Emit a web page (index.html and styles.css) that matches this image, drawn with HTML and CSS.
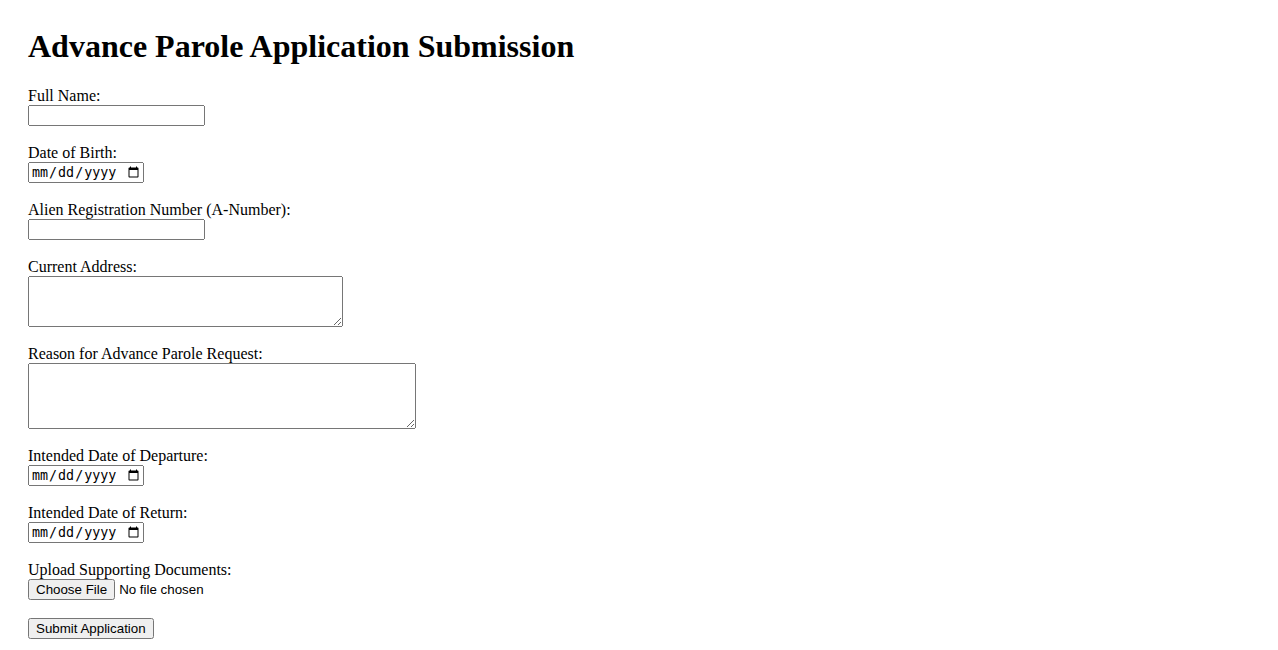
FILE: index.html
```html
<!DOCTYPE html>
<html lang="en">
<head>
<meta charset="utf-8">
<title>Advance Parole Application Submission</title>
<link rel="stylesheet" href="styles.css">
</head>
<body>
<h1 class="title">Advance Parole Application Submission</h1>
<form class="form">
  <div class="field">
    <label class="label" for="name">Full Name:</label>
    <input class="text" type="text" id="name">
  </div>
  <div class="field">
    <label class="label" for="dob">Date of Birth:</label>
    <input class="date" type="date" id="dob">
  </div>
  <div class="field">
    <label class="label" for="anum">Alien Registration Number (A-Number):</label>
    <input class="text" type="text" id="anum">
  </div>
  <div class="field">
    <label class="label" for="addr">Current Address:</label>
    <textarea class="area area-addr" id="addr"></textarea>
  </div>
  <div class="field">
    <label class="label" for="reason">Reason for Advance Parole Request:</label>
    <textarea class="area area-reason" id="reason"></textarea>
  </div>
  <div class="field">
    <label class="label" for="dep">Intended Date of Departure:</label>
    <input class="date" type="date" id="dep">
  </div>
  <div class="field">
    <label class="label" for="ret">Intended Date of Return:</label>
    <input class="date" type="date" id="ret">
  </div>
  <div class="field">
    <label class="label" for="docs">Upload Supporting Documents:</label>
    <input class="file" type="file" id="docs">
  </div>
  <div class="field field-last">
    <button class="submit" type="submit">Submit Application</button>
  </div>
</form>
</body>
</html>
```
FILE: styles.css
```css
body {
  margin: 0;
  padding: 28px 28px 0;
  font-family: "Liberation Serif", "Times New Roman", serif;
  font-size: 16px;
  color: #000;
  background: #fff;
}
.title {
  font-size: 32px;
  font-weight: bold;
  margin: 0 0 22px;
  line-height: 37px;
}
.form {
  display: flex;
  flex-direction: column;
  align-items: flex-start;
}
.field {
  display: flex;
  flex-direction: column;
  align-items: flex-start;
  margin-bottom: 18px;
}
.field-last {
  margin-bottom: 0;
}
.label {
  line-height: 18px;
}
.text {
  width: 177px;
  height: 21px;
  box-sizing: border-box;
  margin: 0;
}
.date {
  width: 116px;
  height: 21px;
  box-sizing: border-box;
  margin: 0;
}
.area {
  box-sizing: border-box;
  margin: 0;
}
.area-addr {
  width: 315px;
  height: 51px;
}
.area-reason {
  width: 388px;
  height: 66px;
}
.file {
  margin: 0;
  font-family: "Liberation Sans", Arial, sans-serif;
  font-size: 13.33px;
}
.submit {
  margin: 0;
  font-family: "Liberation Sans", Arial, sans-serif;
  font-size: 13.33px;
}
```
